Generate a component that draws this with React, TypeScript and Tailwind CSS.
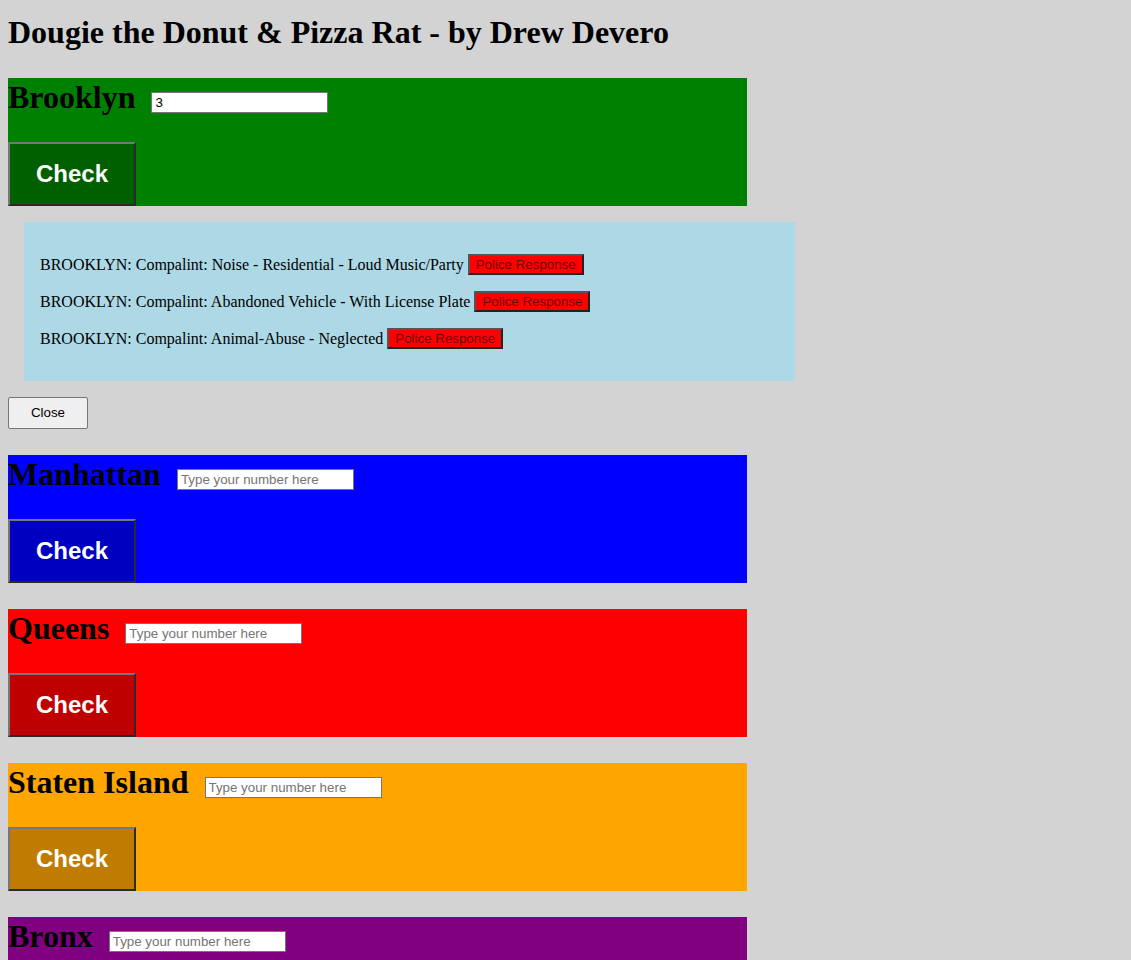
const boroughs = [
    { name: "Brooklyn", bg: "bg-[#008000]", btn: "bg-[#006000]", value: "3" },
    { name: "Manhattan", bg: "bg-[#0000ff]", btn: "bg-[#0000c0]", value: "" },
    { name: "Queens", bg: "bg-[#ff0000]", btn: "bg-[#bf0000]", value: "" },
    { name: "Staten Island", bg: "bg-[#ffa500]", btn: "bg-[#bf7c00]", value: "" },
    { name: "Bronx", bg: "bg-[#800080]", btn: "bg-[#600060]", value: "" },
];

const complaints = [
    "Noise - Residential - Loud Music/Party",
    "Abandoned Vehicle - With License Plate",
    "Animal-Abuse - Neglected",
];

const Borough = ({ b }: { b: (typeof boroughs)[number] }) => (
    <section className={`${b.bg} w-[739px] h-[128px] flex flex-col shrink-0`}>
        <div className="flex items-start gap-[16px]">
            <h2 className="text-[32px] font-bold leading-[37px] mt-[1px] text-black">{b.name}</h2>
            <input
                readOnly
                defaultValue={b.value}
                placeholder="Type your number here"
                className="mt-[14px] w-[177px] h-[21px] bg-white border border-[#767676] px-[3px] text-[13.33px] font-['Liberation_Sans',sans-serif] text-black placeholder:text-[#757575] outline-none"
            />
        </div>
        <button
            className={`${b.btn} mt-[26px] w-[128px] h-[64px] border-2 border-t-[#777] border-l-[#777] border-b-[#2a2a2a] border-r-[#2a2a2a] text-white font-bold text-[24px] font-['Liberation_Sans',sans-serif]`}
        >
            Check
        </button>
    </section>
);

const App = () => {
    const [first, ...rest] = boroughs;

    return (
        <div className="min-h-screen bg-[#d3d3d3] font-['Liberation_Serif',serif] text-black px-[8px] pt-[14px] pb-[40px] flex flex-col">
            <h1 className="text-[32px] font-bold leading-[37px]">Dougie the Donut &amp; Pizza Rat - by Drew Devero</h1>

            <div className="mt-[27px] flex flex-col">
                <Borough b={first} />

                <div className="mt-[16px] ml-[16px] w-[771px] bg-[#add8e6] pt-[32px] pb-[32px] pl-[16px] flex flex-col gap-[16px]">
                    {complaints.map((c) => (
                        <div key={c} className="h-[21px] flex items-center text-[16px]">
                            <span>BROOKLYN: Compalint: {c}</span>
                            <button className="ml-[4px] h-[21px] px-[6px] bg-[#ff0000] border-2 border-t-[#555] border-l-[#555] border-b-[#222] border-r-[#222] text-[13.33px] text-[#700000] font-['Liberation_Sans',sans-serif] leading-none">
                                Police Response
                            </button>
                        </div>
                    ))}
                </div>

                <button className="mt-[16px] w-[80px] h-[32px] bg-[#efefef] border border-[#767676] rounded-[2px] text-[13.33px] font-['Liberation_Sans',sans-serif]">
                    Close
                </button>

                <div className="mt-[26px] flex flex-col gap-[26px]">
                    {rest.map((b) => (
                        <Borough key={b.name} b={b} />
                    ))}
                </div>
            </div>
        </div>
    );
};

export default App;
